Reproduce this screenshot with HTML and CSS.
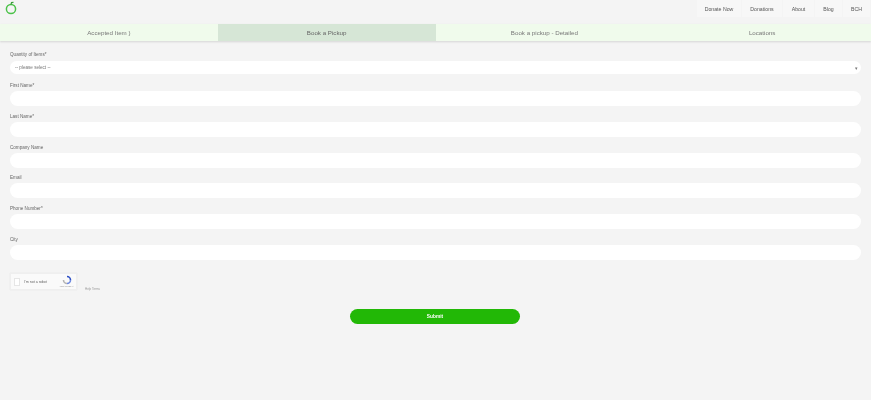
FILE: index.html
```html
<!DOCTYPE html>
<html lang="en">
<head>
<meta charset="utf-8">
<title>Book a Pickup</title>
<link rel="stylesheet" href="styles.css">
</head>
<body>
<header class="top">
  <svg class="logo" width="14" height="16" viewBox="0 0 14 16" aria-hidden="true">
    <circle cx="6" cy="8" r="4.6" fill="none" stroke="#4cc24a" stroke-width="1.5"/>
    <path d="M6 3.6 L6.5 1.6 L8.5 1.4" fill="none" stroke="#3a9e3a" stroke-width="1.2"/>
  </svg>
  <nav class="nav">
    <a class="nav-item">Donate Now</a>
    <a class="nav-item">Donations</a>
    <a class="nav-item">About</a>
    <a class="nav-item">Blog</a>
    <a class="nav-item">BCH</a>
  </nav>
</header>
<div class="tabs">
  <div class="tab">Accepted Item )</div>
  <div class="tab active">Book a Pickup</div>
  <div class="tab">Book a pickup - Detailed</div>
  <div class="tab">Locations</div>
</div>
<form class="form">
  <div class="field field-first">
    <label class="label">Quantity of Items*</label>
    <div class="select"><span>-- please select --</span><span class="caret">▾</span></div>
  </div>
  <div class="field field-second"><label class="label">First Name*</label><div class="input"></div></div>
  <div class="field"><label class="label">Last Name*</label><div class="input"></div></div>
  <div class="field"><label class="label">Company Name</label><div class="input"></div></div>
  <div class="field"><label class="label">Email</label><div class="input"></div></div>
  <div class="field"><label class="label">Phone Number*</label><div class="input"></div></div>
  <div class="field"><label class="label">City</label><div class="input"></div></div>
  <div class="captcha-row">
    <div class="captcha">
      <span class="check"></span>
      <span class="captcha-text">I'm not a robot</span>
      <span class="captcha-brand">
        <svg width="10" height="10" viewBox="0 0 10 10" aria-hidden="true">
          <path d="M5 1.5 A3.5 3.5 0 0 1 8.5 5" fill="none" stroke="#2d4fc4" stroke-width="1.6"/>
          <path d="M8.5 5 A3.5 3.5 0 0 1 5 8.5" fill="none" stroke="#6f8ae0" stroke-width="1.6"/>
          <path d="M5 8.5 A3.5 3.5 0 0 1 1.5 5" fill="none" stroke="#b5b5b5" stroke-width="1.6"/>
        </svg>
        <span class="captcha-small">reCAPTCHA</span>
      </span>
    </div>
    <span class="captcha-note">Help Terms</span>
  </div>
  <div class="actions"><button class="submit" type="button">Submit</button></div>
</form>
</body>
</html>
```
FILE: styles.css
```css
* { box-sizing: border-box; }
html, body { margin: 0; height: 100%; }
body {
  background: #f4f4f4;
  font-family: "Liberation Sans", Arial, sans-serif;
  color: #666;
  font-size: 6px;
  overflow: hidden;
  filter: blur(0.6px);
}
.top { height: 24px; display: flex; justify-content: space-between; align-items: flex-start; padding-right: 1px; }
.logo { margin: 1px 0 0 5px; }
.nav { display: flex; gap: 1px; }
.nav-item {
  height: 17px; display: flex; align-items: center; justify-content: center;
  background: #f7f7f7; color: #555; font-size: 5.2px; white-space: nowrap;
}
.nav-item:nth-child(1) { width: 44px; }
.nav-item:nth-child(2) { width: 40px; }
.nav-item:nth-child(3) { width: 31px; }
.nav-item:nth-child(4) { width: 27px; }
.nav-item:nth-child(5) { width: 27px; }
.tabs {
  display: grid; grid-template-columns: repeat(4, 1fr); height: 17px;
  box-shadow: 0 1px 2px rgba(0,0,0,.13);
}
.tab { background: #f0fbec; display: flex; align-items: center; justify-content: center; color: #777; font-size: 6.2px; }
.tab.active { background: #d6e6d6; color: #666; }
.form { padding: 0 10px; }
.field { padding-top: 5.75px; }
.field-first { padding-top: 9px; }
.field-first .label { height: 11px; }
.field-second { padding-top: 7px; }
.label { display: block; height: 10px; line-height: 10.5px; font-size: 4.6px; color: #666; }
.input { height: 15px; background: #fff; border-radius: 8px; }
.select {
  height: 13px; background: #fff; border-radius: 7px; display: flex; justify-content: space-between;
  align-items: center; padding: 0 3px 0 5px; color: #777; font-size: 4.6px;
}
.caret { font-size: 5px; }
.captcha-row { display: flex; align-items: flex-end; gap: 8px; margin-top: 13.5px; }
.captcha {
  width: 67px; height: 17px; background: #fafafa; border: 1px solid #efefef; display: flex; align-items: center;
  padding: 0 2px 0 3px; box-shadow: 0 0 1px rgba(0,0,0,.1);
}
.check { width: 6px; height: 8px; background: #fff; border: 1px solid #e6e6e6; }
.captcha-text { margin-left: 4px; font-size: 3.6px; color: #666; flex: 1; white-space: nowrap; }
.captcha-brand { display: flex; flex-direction: column; align-items: center; }
.captcha-small { font-size: 2.5px; color: #888; }
.captcha-note { font-size: 3px; color: #999; line-height: 4px; margin-bottom: -1px; }
.actions { display: flex; justify-content: center; margin-top: 19px; }
.submit {
  width: 170px; height: 15px; border: 0; border-radius: 8px; background: #22b806; color: #fff;
  font: bold 4.8px "Liberation Sans", Arial, sans-serif; padding: 0; margin-right: 1px;
}
```
